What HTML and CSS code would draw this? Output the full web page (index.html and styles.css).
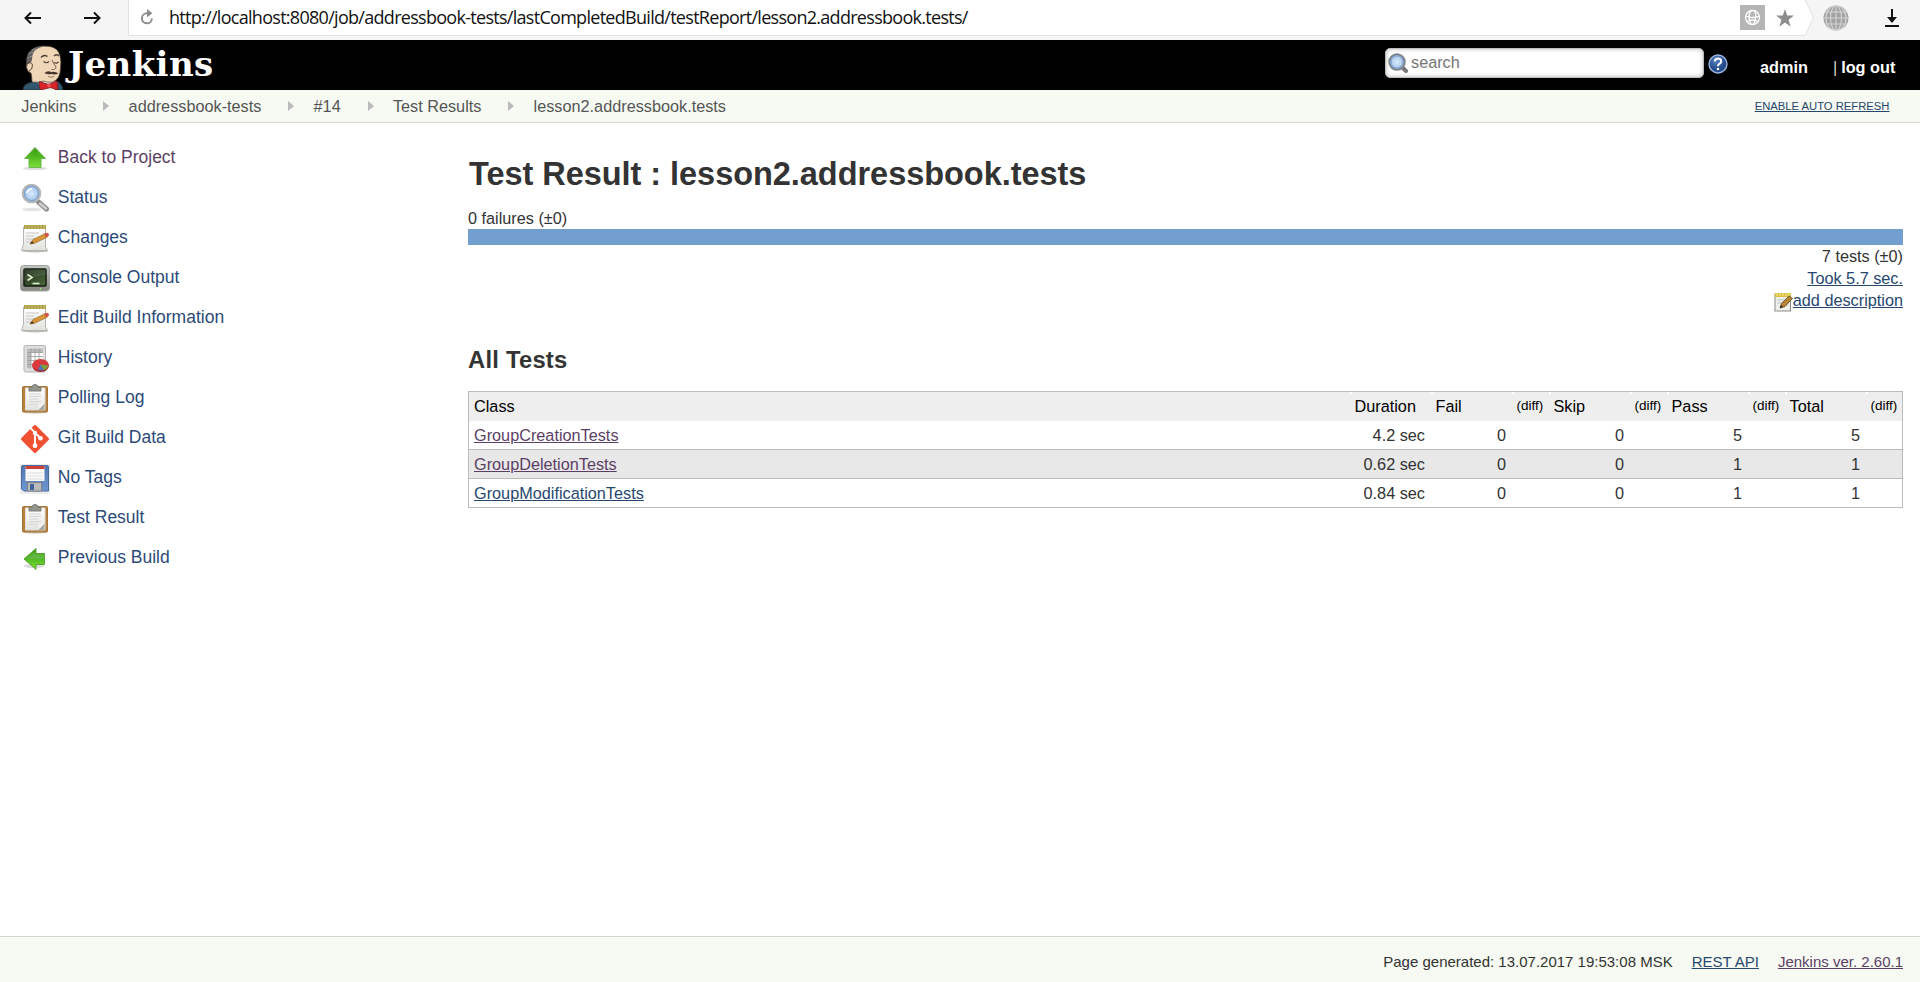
FILE: index.html
```html
<!DOCTYPE html>
<html lang="en">
<head>
<meta charset="utf-8">
<title>Test Result : lesson2.addressbook.tests [Jenkins]</title>
<link rel="stylesheet" href="styles.css">
</head>
<body>
<svg class="defs" width="0" height="0">
  <defs>
    <linearGradient id="green" x1="0" y1="0" x2="0" y2="1"><stop offset="0" stop-color="#3d9a10"/><stop offset="0.5" stop-color="#53bb20"/><stop offset="1" stop-color="#7be03a"/></linearGradient>
    <linearGradient id="paper" x1="0" y1="0" x2="0" y2="1"><stop offset="0" stop-color="#ffffff"/><stop offset="1" stop-color="#e2e2de"/></linearGradient>
    <linearGradient id="screen" x1="0" y1="0" x2="1" y2="1"><stop offset="0" stop-color="#1d2c17"/><stop offset="1" stop-color="#4d6a3d"/></linearGradient>
    <linearGradient id="metal" x1="0" y1="0" x2="0" y2="1"><stop offset="0" stop-color="#c4c6c2"/><stop offset="1" stop-color="#85877f"/></linearGradient>
    <linearGradient id="disk" x1="0" y1="0" x2="0" y2="1"><stop offset="0" stop-color="#5276b0"/><stop offset="1" stop-color="#6f97d0"/></linearGradient>
    <radialGradient id="lens"><stop offset="0" stop-color="#d8eafa"/><stop offset="1" stop-color="#9dc0e8"/></radialGradient>
    <radialGradient id="helpfill" cx=".4" cy=".3"><stop offset="0" stop-color="#5b84c4"/><stop offset="1" stop-color="#234a8c"/></radialGradient>
    <symbol id="i-up" viewBox="0 0 30 30"><ellipse cx="15" cy="24.5" rx="12" ry="1.6" fill="#ddd"/><path d="M15 3.5 25.500 14.500H21v9H9v-9H4.500z" fill="url(#green)" stroke="#6fb552"/></symbol>
    <symbol id="i-left" viewBox="0 0 30 30"><ellipse cx="14" cy="22" rx="10.500" ry="2" fill="#ddd"/><path d="M4 15 16 4.500v5h8.500v11H16v5z" fill="url(#green)" stroke="#5aa63a"/><path d="M6.500 15l9-7.500v3h8.500v4.500z" fill="#6cb850" opacity=".7"/></symbol>
    <symbol id="i-search" viewBox="0 0 30 30"><ellipse cx="12" cy="25.500" rx="10" ry="1.700" fill="#e4e4e4"/><path d="M18.500 18 26.500 25" stroke="#8d8d8d" stroke-width="5" stroke-linecap="round"/><path d="M20 19.500 26 24.500" stroke="#d0d0d0" stroke-width="2.500" stroke-linecap="round"/><circle cx="11.500" cy="9.500" r="8.500" fill="url(#lens)" stroke="#b3b6b8" stroke-width="2.500"/><circle cx="11.500" cy="9.500" r="7" fill="none" stroke="#6f98cd"/><path d="M7 9q1-4 5-4" fill="none" stroke="#f1f8ff" stroke-width="2"/></symbol>
    <symbol id="i-note" viewBox="0 0 30 30"><ellipse cx="15" cy="27" rx="13" ry="1.500" fill="#bbb"/><path d="M3.500 3h22v20l2 3.500H1.500l2-6z" fill="url(#paper)" stroke="#b5b4ae"/><path d="M4 1h22v4H4z" fill="#a99b45"/><path d="M6 1v4M9 1v4M12 1v4M15 1v4M18 1v4M21 1v4M24 1v4" stroke="#d0c575"/><path d="M6 9h13M6 12h8M6 15h11M6 18h6" stroke="#c7c7c7"/><path d="m10 20 3-4.500 12.500-6 2 3.500-13 6.300z" fill="#d99437" stroke="#9a6b30" stroke-width=".7"/><path d="m24 10 2.500-1.300q2.700 0 2.500 2.800L26 13.500z" fill="#d35749"/><path d="m10 20 2-3 2 2.300z" fill="#4c3b22"/></symbol>
    <symbol id="i-console" viewBox="0 0 30 30"><rect x=".5" y="1.500" width="29" height="25.500" rx="3" fill="url(#metal)" stroke="#a3a49f"/><rect x="4" y="5" width="22" height="17" rx="1" fill="url(#screen)" stroke="#141c12" stroke-width="1.500"/><path d="M4 5h22v6Q15 12 4 17z" fill="#fff" opacity=".08"/><path d="m7.500 10.500 4.500 3-4.500 3" fill="none" stroke="#d8ecc8" stroke-width="1.700"/><path d="M12.500 19.500h7" stroke="#d8ecc8" stroke-width="1.700"/><circle cx="20.500" cy="24.700" r=".8" fill="#9cff68"/></symbol>
    <symbol id="i-history" viewBox="0 0 30 30"><rect x="4" y="1.500" width="21.500" height="26.500" rx="1.500" fill="#dedede" stroke="#b4b4b4"/><rect x="7" y="4.500" width="16" height="20" fill="#fff"/><path d="M7 4.500h16v4H7zM7 8.500h4v16H7z" fill="#b9b9b9"/><path d="M7 8.500h16M7 12.500h16M7 16.500h16M7 20.500h16M11 4.500v20M15 4.500v20M19 4.500v20" stroke="#a0a0a0" stroke-width=".9"/><ellipse cx="20.500" cy="22" rx="8.300" ry="6" fill="#9f1d20"/><ellipse cx="20.500" cy="20.800" rx="8.300" ry="5.800" fill="#d93a3d"/><path d="M20.500 20.500 18 26q5 1.500 8-1.500z" fill="#4b76b5"/><path d="M20.500 20.500 24 26q4-1.500 4-4.500z" fill="#7da23a"/></symbol>
    <symbol id="i-clip" viewBox="0 0 30 30"><ellipse cx="15" cy="28.500" rx="12" ry="1.200" fill="#ccc"/><rect x="2.500" y="2.500" width="25" height="25.500" rx="1" fill="#b98038" stroke="#a5763c"/><path d="M5.500 4h19.500v22H5.500z" fill="url(#paper)" stroke="#ddd"/><path d="M9 10h12M9 12.500h12M9 15h10M9 17.500h12M9 20h9" stroke="#d4d4d4"/><path d="M24.500 19.500 18 26h6.500z" fill="#a7a7a3"/><path d="m18 26 1.500-6L24.500 19.500z" fill="#f4f4f2"/><path d="M9 7V3.500h3Q12 .5 15 .5t3 3h3V7z" fill="#92958e" stroke="#7d807a"/></symbol>
    <symbol id="i-git" viewBox="0 0 30 30"><rect x="4.700" y="4.700" width="20.600" height="20.600" rx="1.300" fill="#f05133" transform="rotate(45 15 15)"/><path d="M10 3.500l5 5.200v13M15 9l5.500 5" fill="none" stroke="#fff" stroke-width="1.900"/><circle cx="15" cy="9" r="2.200" fill="#fff"/><circle cx="20.500" cy="14.300" r="2.300" fill="#fff"/><circle cx="15" cy="21.700" r="2.400" fill="#fff"/></symbol>
    <symbol id="i-disk" viewBox="0 0 30 30"><path d="M0 0h30v30H0z" fill="#ebebeb"/><path d="M3 1.500h24q1.500 0 1.500 1.500v24H4L1.500 25V3Q1.500 1.500 3 1.500z" fill="url(#disk)" stroke="#4a6ba0"/><path d="M5.500 2h19v15h-19z" fill="#fafafa"/><path d="M5.500 2h19v3h-19z" fill="#cc4139"/><path d="M7 9h16M7 12h16M7 15h16" stroke="#dedede"/><path d="M7.500 18.500h14V27h-14z" fill="#b9bbb8" stroke="#777a78" stroke-width=".8"/><path d="M10 20h4v6h-4z" fill="#426399"/></symbol>
  </defs>
</svg>

<div class="chrome">
  <div class="chrome-nav">
    <svg width="18" height="14" viewBox="0 0 18 14"><path d="M1.500 7H17M7 1.500 1.500 7 7 12.500" fill="none" stroke="#111" stroke-width="2"/></svg>
    <svg width="18" height="14" viewBox="0 0 18 14"><path d="M1 7h15.500M11 1.500 16.500 7 11 12.500" fill="none" stroke="#111" stroke-width="2"/></svg>
  </div>
  <div class="address">
    <svg class="reload" width="14" height="16" viewBox="0 0 14 16"><path d="M11.900 9.500A5 5 0 1 1 7 4.300h1.500" fill="none" stroke="#8c8c8c" stroke-width="1.900"/><path d="M7 0l5.500 4.300L7 8.200z" fill="#8c8c8c"/></svg>
    <span class="url">http://localhost:8080/job/addressbook-tests/lastCompletedBuild/testReport/lesson2.addressbook.tests/</span>
    <svg class="site" width="25" height="25" viewBox="0 0 25 25"><path d="M0 0h25v25H0z" fill="#b5b5b5"/><g fill="none" stroke="#fff" stroke-width="1.300"><circle cx="12.500" cy="12.500" r="7"/><path d="M5.500 11q7 3 14 0M7 16.500q5-3 11 0M11 5.700q-4 6 0 13.500M14.500 5.700q3 6-1 13.700"/></g></svg>
    <svg class="star" width="18" height="18" viewBox="0 0 18 18"><path d="m9 0 2.200 6.500H18l-5.400 4.200 2 7.100L9 13.500l-5.600 4.300 2-7.100L0 6.500h6.800z" fill="#8d8d8d"/></svg>
  </div>
  <svg class="tip" width="9" height="36" viewBox="0 0 9 36"><path d="M0 0 8.500 17.500 0 35z" fill="#fff"/><path d="M0 0 8.500 17.500 0 35.500" fill="none" stroke="#e2e2e2"/></svg>
  <svg class="globe" width="26" height="26" viewBox="0 0 26 26"><circle cx="13" cy="13" r="12.500" fill="#a3a3a3"/><g fill="none" stroke="#d6d6d6" stroke-width="1.100"><path d="M13 0v26M0 13h26M2 7h22M2 19h22"/><ellipse cx="13" cy="13" rx="5.500" ry="12.500"/><ellipse cx="13" cy="13" rx="10" ry="12.500"/></g></svg>
  <svg class="download" width="14" height="18" viewBox="0 0 14 18"><path d="M7 0v12M0 17h14" stroke="#111" stroke-width="2"/><path d="M2 8h10l-5 6z" fill="#111"/></svg>
</div>

<header class="header">
  <a class="logo">
    <svg width="43" height="46" viewBox="0 0 43 46">
      <path d="M2 46q0-6 8-7.500l8-2h16q7 2 8 9.500z" fill="#33566f" stroke="#22333e"/>
      <path d="M17 37l3 9h14l2-9z" fill="#e8e8e8"/>
      <path d="M11 38q0-5-1-9-4-1-4.500-6 0-4 2-6Q7 7 14 4q7-3 15-1.500 8 1.500 10 9 1.500 7 .5 12 0 12-8 14.500-5 1-9-1-4 2-11.500 1z" fill="#efd6b7" stroke="#55463a" stroke-width=".7"/>
      <path d="M5.500 22Q4 10 11 5q7-4.500 14-3-8 1-11.500 5-2.500 3-2.500 9l-2 4z" fill="#615d5d"/>
      <path d="M6.500 15q2-3 5-3M7 10.500q3-2.500 5.500-2M11 6.500l4-2" fill="none" stroke="#a09b99" stroke-width=".9"/>
      <path d="M6.500 20q4-3 5 1 0 5-3.500 6" fill="#efd6b7" stroke="#5a483b"/>
      <path d="M20 13.500q3-3.500 6.500-1M33 12q3-2.500 5 0" fill="none" stroke="#4b3f38" stroke-width="1.300"/>
      <path d="M22.500 17.500q3 2.500 5.500 0M33 18.500q2.500 1.500 4.500-.5" fill="none" stroke="#4b3f38" stroke-width="1.100"/>
      <path d="M31 16q1 3 4 7 0 3-4.500 2.500" fill="none" stroke="#7b6352" stroke-width="1"/>
      <path d="M23.500 29q3-3 7-1 4-1 7 1.500-4 1.500-7 .5-4 1-7-1z" fill="#4b3630"/>
      <path d="M27 32.500q3 1.500 6 0" fill="none" stroke="#8a6a56" stroke-width=".9"/>
      <path d="M18.500 37.500l9 3 8-3.500q2 3 1 9l-7-2.500-10 2.500q-2-4-1-8.500z" fill="#d8232a" stroke="#801317" stroke-width=".8"/>
      <circle cx="28" cy="41.500" r="2" fill="#ef4b4b"/>
    </svg>
    <span class="logo-text">Jenkins</span>
  </a>
  <div class="searchbox">
    <svg width="20" height="20" viewBox="0 0 20 20"><path d="m14 14 4 4" stroke="#77777a" stroke-width="4" stroke-linecap="round"/><circle cx="9" cy="9" r="7.700" fill="url(#lens)" stroke="#7e8489" stroke-width="2"/><circle cx="9" cy="9" r="6.200" fill="none" stroke="#6f98cd"/></svg>
    <span>search</span>
  </div>
  <svg class="help" width="20" height="20" viewBox="0 0 20 20"><circle cx="10" cy="10" r="9" fill="url(#helpfill)" stroke="#9db7df" stroke-width="1.400"/><path d="M6.700 7.500Q7 4.500 10 4.500q3.200.2 3.200 2.800 0 1.600-1.800 2.600Q10 10.700 10 12.200" fill="none" stroke="#fff" stroke-width="2"/><circle cx="10" cy="15" r="1.300" fill="#fff"/></svg>
  <a class="user">admin</a>
  <span class="logout"><i>|</i> <a>log out</a></span>
</header>

<nav class="crumbs">
  <a>Jenkins</a><b class="sep"></b><a>addressbook-tests</a><b class="sep"></b><a>#14</a><b class="sep"></b><a>Test Results</a><b class="sep"></b><a>lesson2.addressbook.tests</a>
  <a class="refresh">ENABLE AUTO REFRESH</a>
</nav>

<div class="page">
  <aside class="tasks">
    <a class="task visited"><svg><use href="#i-up"/></svg><span>Back to Project</span></a>
    <a class="task"><svg><use href="#i-search"/></svg><span>Status</span></a>
    <a class="task"><svg><use href="#i-note"/></svg><span>Changes</span></a>
    <a class="task"><svg><use href="#i-console"/></svg><span>Console Output</span></a>
    <a class="task"><svg><use href="#i-note"/></svg><span>Edit Build Information</span></a>
    <a class="task"><svg><use href="#i-history"/></svg><span>History</span></a>
    <a class="task"><svg><use href="#i-clip"/></svg><span>Polling Log</span></a>
    <a class="task"><svg><use href="#i-git"/></svg><span>Git Build Data</span></a>
    <a class="task"><svg><use href="#i-disk"/></svg><span>No Tags</span></a>
    <a class="task"><svg><use href="#i-clip"/></svg><span>Test Result</span></a>
    <a class="task"><svg><use href="#i-left"/></svg><span>Previous Build</span></a>
  </aside>
  <main class="main">
    <h1>Test Result : lesson2.addressbook.tests</h1>
    <div class="failures">0 failures (±0)</div>
    <div class="bar"></div>
    <div class="summary">
      <div>7 tests (±0)</div>
      <div><a class="link">Took 5.7 sec.</a></div>
      <div class="describe"><svg width="19" height="20" viewBox="0 0 19 20"><rect x="1" y="2" width="15.500" height="17" fill="#eeeeea" stroke="#8d8d88"/><path d="M1 1h16v4H1z" fill="#d9c040"/><path d="M3 1v3M6 1v3M9 1v3M12 1v3M15 1v3" stroke="#f7e98d"/><path d="M3.500 8h8M3.500 11h6" stroke="#bbb"/><path d="m6 16 1.500-4.500L15 4l3.500 2.500L11 14.500z" fill="#b88435" stroke="#5d4220" stroke-width=".8"/><path d="m6 16 1-3 2 2z" fill="#2f2518"/></svg><a class="link">add description</a></div>
    </div>
    <h2>All Tests</h2>
    <table class="results">
      <colgroup><col><col class="wide"><col class="wide"><col class="diff"><col class="wide"><col class="diff"><col class="wide"><col class="diff"><col class="wide"><col class="diff"></colgroup>
      <thead><tr><th>Class</th><th>Duration</th><th>Fail</th><th class="small">(diff)</th><th>Skip</th><th class="small">(diff)</th><th>Pass</th><th class="small">(diff)</th><th>Total</th><th class="small">(diff)</th></tr></thead>
      <tbody>
        <tr><td><a class="link visited">GroupCreationTests</a></td><td>4.2 sec</td><td>0</td><td></td><td>0</td><td></td><td>5</td><td></td><td>5</td><td></td></tr>
        <tr class="hover"><td><a class="link visited">GroupDeletionTests</a></td><td>0.62 sec</td><td>0</td><td></td><td>0</td><td></td><td>1</td><td></td><td>1</td><td></td></tr>
        <tr><td><a class="link">GroupModificationTests</a></td><td>0.84 sec</td><td>0</td><td></td><td>0</td><td></td><td>1</td><td></td><td>1</td><td></td></tr>
      </tbody>
    </table>
  </main>
</div>

<footer class="footer">
  <span>Page generated: 13.07.2017 19:53:08 MSK</span>
  <a class="link">REST API</a>
  <a class="link visited">Jenkins ver. 2.60.1</a>
</footer>
</body>
</html>
```
FILE: styles.css
```css
* { box-sizing: border-box; }
html, body { height: 100%; }
body {
  margin: 0;
  display: flex;
  flex-direction: column;
  background: #fff;
  color: #333;
  font: 16.25px/22px "Liberation Sans", Arial, sans-serif;
}
svg { display: block; flex: none; }
.defs { position: absolute; }

/* browser bar */
.chrome { display: flex; height: 40px; flex: none; background: #f5f5f5; align-items: flex-start; }
.chrome-nav { width: 128px; padding: 11px 0 0 24px; display: flex; gap: 41px; }
.address {
  width: 1677px; height: 36px; background: #fff;
  border-left: 1px solid #e4e4e4; border-bottom: 1px solid #e2e2e2;
  display: flex; align-items: center; padding-left: 11px;
}
.reload { margin-top: -1px; }
.url {
  flex: 1; margin-left: 15px; margin-top: -1px; color: #111; white-space: nowrap;
  font: 18px/24px "Open Sans", "Noto Sans", sans-serif; letter-spacing: -0.71px;
}
.star { margin: 0 10px 0 11px; }
.address { padding-right: 1px; }
.tip { width: 9px; }
.globe { margin: 5px 0 0 9px; }
.download { margin: 9px 0 0 36px; }

/* header */
.header { display: flex; height: 50px; flex: none; background: #000; color: #fff; font-weight: bold; }
.logo { display: flex; padding: 4px 0 0 21px; width: 1385px; overflow: hidden; }
.logo-text {
  margin-left: 4px;
  font: bold 34px/40px "DejaVu Serif", serif;
  letter-spacing: 0.4px;
}
.searchbox {
  width: 319px; height: 30px; margin-top: 8px; padding: 0 0 0 2px;
  display: flex; align-items: center; border-radius: 5px;
  border: 1px solid #bbb; background: #fff;
  box-shadow: inset 0 0 4px rgba(0,0,0,.3);
  color: #757575; font-weight: normal;
}
.searchbox svg { margin-top: -1px; }
.searchbox span { margin: -2px 0 0 3px; }
.help { margin: 14px 0 0 4px; }
.user { margin: 16px 0 0 32px; width: 73px; }
.logout { margin-top: 16px; white-space: nowrap; }
.logout i { font-style: normal; font-weight: normal; color: #d3d7c0; margin-right: -0.6px; }

/* breadcrumbs */
.crumbs {
  display: flex; align-items: center; height: 33px; flex: none;
  background: #f6faf2; border-bottom: 1px solid #d3d7cf;
  padding: 0 30.5px 0 21.300px; color: #555;
}
.sep { margin: 0 19.2px 0 27px; border: 5px solid transparent; border-left: 6px solid #bbb; border-right: 0; }
.refresh { margin-left: auto; font-size: 11.25px; color: #26486f; text-decoration: underline; }

/* body */
.page { display: flex; flex: 1; }
.tasks { width: 468px; padding: 16px 0 0 20px; font-size: 17.5px; }
.task { display: flex; height: 40px; color: #2b4a78; }
.task svg { width: 30px; height: 30px; margin-top: 5px; }
.task span { margin: 7px 0 0 7.8px; }
.link { color: #26486f; text-decoration: underline; }
.link.visited, .task.visited { color: #5c3f66; }

.main { width: 1435px; }
h1 { margin: 0; padding: 30px 0 0 1px; font-size: 32.5px; line-height: 42px; letter-spacing: -0.04px; }
.failures { margin-top: 12px; }
.bar { height: 16px; background: #729fcf; }
.summary { text-align: right; }
.describe { display: flex; justify-content: flex-end; }
.describe svg { margin-top: 3px; }
h2 { margin: 33px 0 0; font-size: 23.75px; line-height: 30px; letter-spacing: 0.25px; }

.results {
  width: 100%; margin-top: 16px; table-layout: fixed;
  border-collapse: collapse; border: 1px solid #bbb;
}
.wide { width: 81px; }
.diff { width: 37px; }
.results th, .results td { height: 29px; padding: 0 5.5px 0 5px; line-height: 22px; }
.results th {
  background: #eee linear-gradient(#fff, #fff) left top / 2px 2px no-repeat;
  color: #000; font-weight: normal; text-align: left;
}
.results th:first-child { background-image: none; }
.results th.small { font-size: 13.5px; padding: 0 0 1px 5px; }
.results td { text-align: right; border-bottom: 1px solid #bbb; }
.results td:first-child { text-align: left; }
.hover td { background: #e8e8e8; }

.footer {
  display: flex; justify-content: flex-end; gap: 19px; flex: none;
  height: 46px; padding: 14px 17px 0 0;
  background: #f6faf2; border-top: 1px solid #d3d7cf; font-size: 15px;
}
```
